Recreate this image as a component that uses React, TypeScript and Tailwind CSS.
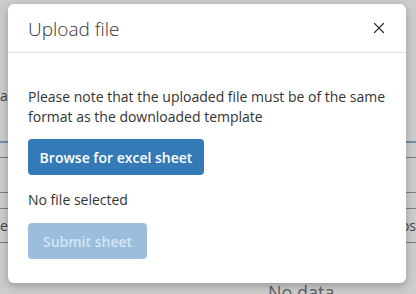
import { X } from 'lucide-react'

const font = { fontFamily: '"Open Sans", "Noto Sans", Arial, sans-serif' }

function BackgroundPage() {
  return (
    <div className="w-[416px] h-[294px] overflow-hidden bg-white text-[#555] text-[14px]" style={font}>
      <div className="h-[86px]" />
      <div className="h-[20px] leading-[20px]">as</div>
      <div className="h-[35px]" />
      <div className="border-t-2 border-[#4a7fb0]/60 h-[16px]" />
      <div className="border-t border-[#999] h-[35px]" />
      <div className="border-t border-[#999] h-[16px]" />
      <div className="border-t border-[#999] h-[34px] flex items-center justify-between">
        <span>es</span>
        <span>os</span>
      </div>
      <div className="border-t border-[#999] h-[40px]" />
      <div className="pl-[268px] text-[18px] leading-[20px] text-[#777]">No data</div>
    </div>
  )
}

export default function App() {
  return (
    <div className="relative w-[416px] h-[294px] overflow-hidden">
      <BackgroundPage />
      <div className="absolute inset-0 bg-black/20 px-[8px] pt-[4px]" style={font}>
        <div className="bg-white rounded-[6px] shadow-[0_3px_9px_rgba(0,0,0,0.25)] w-[398px] text-[#333]">
          {/* header */}
          <div className="h-[49px] border-b border-[#e0e0e0] flex items-center justify-between pl-[20px] pr-[18px]">
            <h4 className="text-[19px] leading-[24px] font-light text-[#333] pt-[1px]">Upload file</h4>
            <X className="w-[18px] h-[18px] text-[#333]" strokeWidth={1.6} />
          </div>

          {/* body */}
          <div className="pl-[20px] pr-[20px] pt-[34px] pb-[24px]">
            <p className="text-[14px] leading-[20px] text-[#333]">
              Please note that the uploaded file must be of the same format as the downloaded template
            </p>
            <button className="mt-[12px] h-[36px] w-[176px] rounded-[4px] bg-[#337ab7] text-white text-[14px] font-semibold">
              Browse for excel sheet
            </button>
            <p className="mt-[15px] text-[14px] leading-[20px] text-[#333]">No file selected</p>
            <button
              disabled
              className="mt-[13px] h-[36px] w-[119px] rounded-[4px] bg-[#9bbedc] text-[#d6e5f2] text-[14px] font-semibold block"
            >
              Submit sheet
            </button>
          </div>
        </div>
      </div>
    </div>
  )
}
